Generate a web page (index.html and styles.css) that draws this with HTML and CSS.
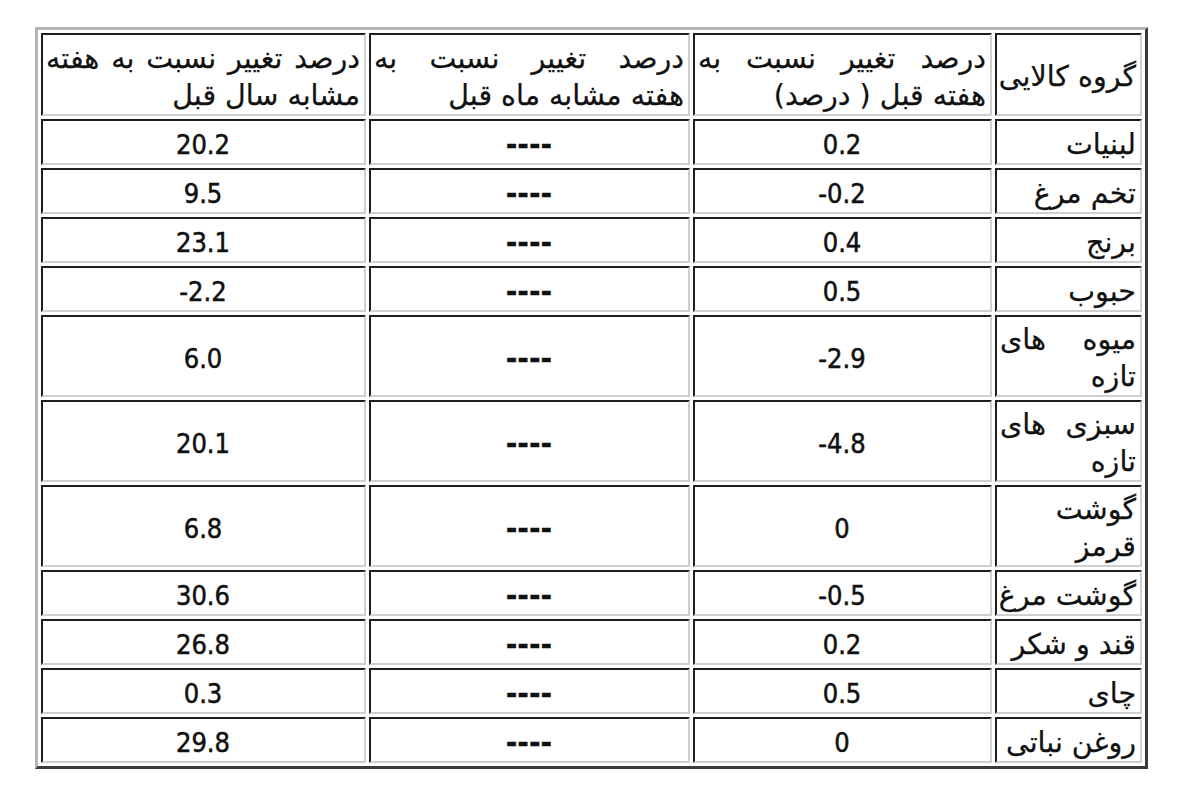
FILE: index.html
```html
<!DOCTYPE html>
<html lang="fa">
<head>
<meta charset="utf-8">
<title>جدول تغییر قیمت کالاها</title>
<link rel="stylesheet" href="styles.css">
</head>
<body>
<table class="price-table" dir="rtl">
  <tr class="head-row">
    <td class="c-group"><div class="last">گروه کالایی</div></td>
    <td class="c-week"><div class="just">درصد تغییر نسبت به</div><div class="last">هفته قبل ( درصد)</div></td>
    <td class="c-month"><div class="just">درصد تغییر نسبت به</div><div class="last">هفته مشابه ماه قبل</div></td>
    <td class="c-year"><div class="just">درصد تغییر نسبت به هفته</div><div class="last">مشابه سال قبل</div></td>
  </tr>
  <tr><td class="name">لبنیات</td><td class="num"><span class="n">0.2</span></td><td class="num"><span class="dash">----</span></td><td class="num"><span class="n">20.2</span></td></tr>
  <tr><td class="name">تخم مرغ</td><td class="num"><span class="n">-0.2</span></td><td class="num"><span class="dash">----</span></td><td class="num"><span class="n">9.5</span></td></tr>
  <tr><td class="name">برنج</td><td class="num"><span class="n">0.4</span></td><td class="num"><span class="dash">----</span></td><td class="num"><span class="n">23.1</span></td></tr>
  <tr><td class="name">حبوب</td><td class="num"><span class="n">0.5</span></td><td class="num"><span class="dash">----</span></td><td class="num"><span class="n">-2.2</span></td></tr>
  <tr><td class="name"><div class="just">میوه های</div><div class="last">تازه</div></td><td class="num"><span class="n">-2.9</span></td><td class="num"><span class="dash">----</span></td><td class="num"><span class="n">6.0</span></td></tr>
  <tr><td class="name"><div class="just">سبزی های</div><div class="last">تازه</div></td><td class="num"><span class="n">-4.8</span></td><td class="num"><span class="dash">----</span></td><td class="num"><span class="n">20.1</span></td></tr>
  <tr><td class="name"><div class="last">گوشت</div><div class="last">قرمز</div></td><td class="num"><span class="n">0</span></td><td class="num"><span class="dash">----</span></td><td class="num"><span class="n">6.8</span></td></tr>
  <tr><td class="name">گوشت مرغ</td><td class="num"><span class="n">-0.5</span></td><td class="num"><span class="dash">----</span></td><td class="num"><span class="n">30.6</span></td></tr>
  <tr><td class="name">قند و شکر</td><td class="num"><span class="n">0.2</span></td><td class="num"><span class="dash">----</span></td><td class="num"><span class="n">26.8</span></td></tr>
  <tr><td class="name">چای</td><td class="num"><span class="n">0.5</span></td><td class="num"><span class="dash">----</span></td><td class="num"><span class="n">0.3</span></td></tr>
  <tr><td class="name">روغن نباتی</td><td class="num"><span class="n">0</span></td><td class="num"><span class="dash">----</span></td><td class="num"><span class="n">29.8</span></td></tr>
</table>
</body>
</html>
```
FILE: styles.css
```css
html, body {
  margin: 0;
  padding: 0;
  background: #ffffff;
}

body {
  padding: 27px 0 0 35px;
  font-family: "DejaVu Sans", "Noto Sans", sans-serif;
  font-size: 28.5px;
  color: #111111;
}

.price-table {
  width: 1113px;
  table-layout: fixed;
  border-collapse: separate;
  border-spacing: 3px;
  border-style: solid;
  border-width: 3px;
  border-color: #b4b4b4 #3a3a3a #3a3a3a #b4b4b4;
}

.price-table td {
  box-sizing: border-box;
  border-style: solid;
  border-width: 2px;
  border-color: #1e1e1e #cfcfcf #cfcfcf #1e1e1e;
  padding: 4px 4px 0 3px;
  line-height: 37px;
  vertical-align: middle;
  height: 46px;
  -webkit-text-stroke: 0.25px #111111;
}

.head-row td {
  height: 83px;
}

.c-group { width: 147px; }
.c-week { width: 299px; }
.c-month { width: 321px; }
.c-year { width: 325px; }

.just {
  white-space: nowrap;
  text-align: justify;
  text-align-last: justify;
}

.last {
  white-space: nowrap;
  text-align: right;
}

.name {
  white-space: nowrap;
  text-align: right;
}

.num {
  text-align: center;
}

.n {
  direction: ltr;
  unicode-bidi: isolate;
  font-family: "DejaVu Sans Condensed", "DejaVu Sans", sans-serif;
  font-size: 27px;
  -webkit-text-stroke: 0.5px #111111;
}

.dash {
  font-size: 28px;
  font-weight: bold;
}
```
